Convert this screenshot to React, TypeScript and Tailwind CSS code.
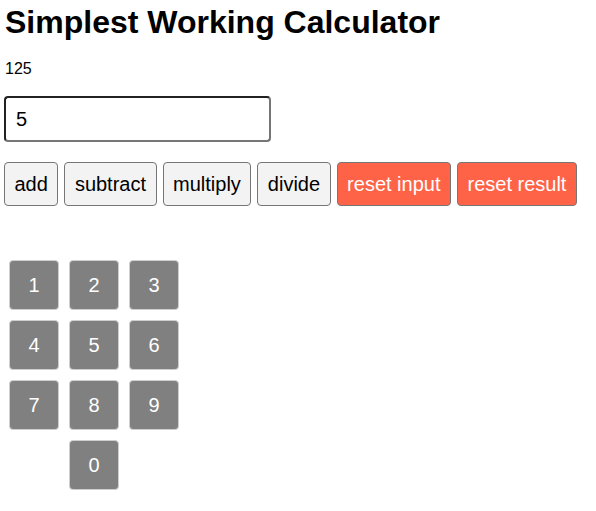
import { useState } from "react";

const digits = [1, 2, 3, 4, 5, 6, 7, 8, 9];

const App = () => {
  const [result, setResult] = useState(125);
  const [input, setInput] = useState("5");

  const num = () => Number(input) || 0;

  const ops = [
    { label: "add", run: () => setResult(result + num()) },
    { label: "subtract", run: () => setResult(result - num()) },
    { label: "multiply", run: () => setResult(result * num()) },
    { label: "divide", run: () => setResult(result / num()) },
  ];

  const press = (d: number) => setInput(input + String(d));

  return (
    <div className="p-1 font-['Liberation_Sans',Arial,sans-serif] text-black bg-white min-h-[511px]">
      <h1 className="text-[32px] font-bold leading-[37px] ml-[1px]">Simplest Working Calculator</h1>
      <p className="mt-[19px] text-base leading-[18px] ml-[1px]">{result}</p>

      <input
        value={input}
        onChange={(e) => setInput(e.target.value)}
        className="mt-[18px] block w-[267px] h-[46px] px-[10px] text-[20px] rounded-[4px] border-2 border-t-[#222] border-l-[#222] border-r-[#767676] border-b-[#767676] outline-none"
      />

      <div className="mt-[20px] flex gap-[6px]">
        {ops.map((op) => (
          <button
            key={op.label}
            onClick={op.run}
            className="h-[44px] px-[9.5px] text-[20px] leading-[23px] bg-[#f3f3f3] border border-[#767676] rounded-[4px]"
          >
            {op.label}
          </button>
        ))}
        <button
          onClick={() => setInput("")}
          className="h-[44px] px-[9.5px] text-[20px] leading-[23px] text-white bg-[#ff6347] border border-[#767676] rounded-[4px]"
        >
          reset input
        </button>
        <button
          onClick={() => setResult(0)}
          className="h-[44px] px-[9.5px] text-[20px] leading-[23px] text-white bg-[#ff6347] border border-[#767676] rounded-[4px]"
        >
          reset result
        </button>
      </div>

      <div className="mt-[54px] ml-[5px] grid grid-cols-[repeat(3,50px)] gap-[10px]">
        {digits.map((d) => (
          <button
            key={d}
            onClick={() => press(d)}
            className="w-[50px] h-[50px] text-[20px] text-white bg-[#808080] border border-[#cfcfcf] rounded-[4px]"
          >
            {d}
          </button>
        ))}
        <button
          onClick={() => press(0)}
          className="col-start-2 w-[50px] h-[50px] text-[20px] text-white bg-[#808080] border border-[#cfcfcf] rounded-[4px]"
        >
          0
        </button>
      </div>
    </div>
  );
};

export default App;
